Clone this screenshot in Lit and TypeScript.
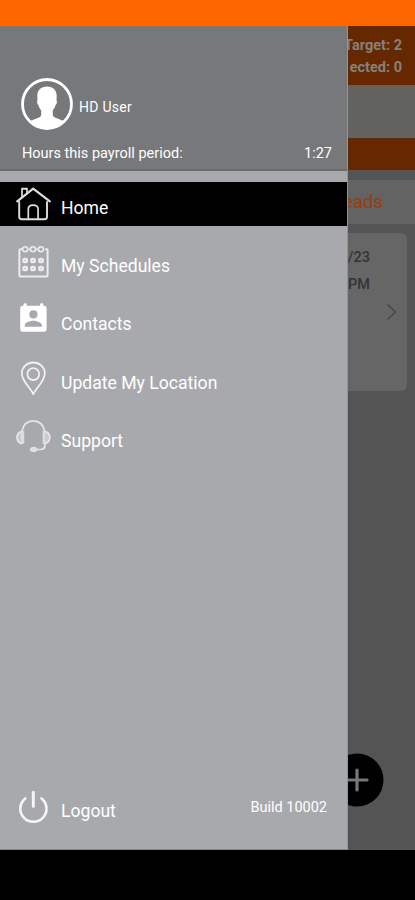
import { LitElement, html, css, svg } from "lit";
import { customElement } from "lit/decorators.js";
import { classMap } from "lit/directives/class-map.js";

const icons = {
  home: svg`<g fill="none" stroke="#dedede" stroke-width="1.900" stroke-linejoin="round" stroke-linecap="round">
    <path d="M3.200 17v14.800q0 2.500 2.500 2.500h22.800q2.500 0 2.500-2.500V17"/>
    <path d="M1.200 16.400 17.200 3.600 33.800 16.400" stroke-width="2.200"/>
    <path d="M6 11.500V3.500h5v4M6 4h5M12.300 34.300V24.300q0-4.200 4.900-4.200t4.900 4.200V34.300" stroke-width="1.700"/></g>`,
  calendar: svg`<g fill="none" stroke="#ececec" stroke-width="1.600">
    <path d="M6 6.200H4.400q-1 0-1 1v25.200q0 1 1 1h26.200q1 0 1-1V7.200q0-1-1-1H29M12.500 6.200h1.300M20.200 6.200h1.500" stroke-width="2"/>
    <circle cx="9.200" cy="6.200" r="2.500"/><circle cx="17" cy="6.200" r="2.500"/><circle cx="24.900" cy="6.200" r="2.500"/></g>
    <g fill="#ececec">${[9.2, 17.1, 25].map((x) => [17.5, 25.5].map((y) => svg`<rect x=${x - 2.9} y=${y - 2.7} width="5.800" height="5.400" rx="2"/>`))}</g>
    <g fill="#c4c5c7">${[9.2, 17.1, 25].map((x) => [17.5, 25.5].map((y) => svg`<circle cx=${x} cy=${y} r=".8"/>`))}</g>`,
  contacts: svg`<path fill="#fff" fill-rule="evenodd" d="M7.500 3.200q0-1 1-1h1.200q1 0 1 1v1.500h13.400V3.200q0-1 1-1h1.200q1 0 1 1v1.500h.7q2.600 0 2.600 2.600v20.800q0 2.600-2.600 2.600H6.800q-2.600 0-2.600-2.600V7.300q0-2.600 2.600-2.600h.7zM17.400 9.300a4.100 4.100 0 1 0 0 8.200a4.100 4.100 0 1 0 0-8.200M8.700 25.800h17.200v-1.300c0-3.200-5.600-4.700-8.600-4.700s-8.600 1.500-8.600 4.700z"/>`,
  pin: svg`<g fill="none" stroke="#f1f1f1" stroke-width="1.800"><path d="M17.300 34.100C15 28.500 5.800 21.300 5.800 13.500a11.500 11 0 0 1 23 0c0 7.800-9.200 15-11.500 20.600z" stroke-linejoin="round"/><circle cx="17.300" cy="14.100" r="5.900"/></g>`,
  headset: svg`<g fill="none" stroke="#e6e6e7" stroke-width="1.700"><path d="M5.800 13.500C7.200 6.500 11.200 2.800 17.300 2.800S27.400 6.500 28.800 13.500"/>
    <path d="M6.200 13.600H5.300Q1 15.200 1 19.500t4.300 6h.9zM28.300 13.600h1.200q4.300 1.600 4.300 5.900t-4.300 6h-1.200z" fill="#c9cacc"/>
    <path d="M7 13v12.600M27.800 13v12.600" stroke-width="2.400" stroke="#dcdcdd"/>
    <path d="M28.900 26v1.200q0 4.300-4.300 4.300H20"/><rect x="14.300" y="29.600" width="6.800" height="3.800" rx="1.900" fill="#e0e0e0" stroke-width="1"/></g>`,
  power: svg`<g fill="none" stroke="#f5f5f5" stroke-linecap="round"><path d="M9.300 9.400A13.100 13.100 0 1 0 25.500 9.400" stroke-width="2.600"/><path d="M17.300 3.300v14" stroke-width="3"/></g>`,
};

const items: { label: string; icon: keyof typeof icons; active?: boolean }[] = [
  { label: "Home", icon: "home", active: true },
  { label: "My Schedules", icon: "calendar" },
  { label: "Contacts", icon: "contacts" },
  { label: "Update My Location", icon: "pin" },
  { label: "Support", icon: "headset" },
];

@customElement("app-root")
export class AppRoot extends LitElement {
  static styles = css`
    :host { display: flex; flex-direction: column; width: 415px; height: 900px; overflow: hidden; font-family: Roboto, sans-serif; background: #000; color: #fff; }
    * { box-sizing: border-box; }
    svg { display: block; flex: none; }
    .status { height: 26px; flex: none; background: #fe6600; }
    .main { height: 824px; flex: none; display: flex; }
    .drawer { width: 348px; flex: none; display: flex; flex-direction: column; background: #a8a9ad; border-right: 1px solid #929396; border-bottom: 1px solid #87888a; }
    .profile { height: 145px; flex: none; background: #77787a; border-bottom: 2px solid #6b6c6e; padding: 52px 15px 0 21px; }
    .user { display: flex; align-items: center; gap: 6px; height: 52px; font-size: 14px; }
    .user span { padding-top: 6px; letter-spacing: .25px; }
    .hours { display: flex; justify-content: space-between; margin-top: 15px; padding-left: 1px; font-size: 14.500px; line-height: 17px; }
    .menu { padding-top: 11px; flex: 1; }
    .item { height: 44px; margin-bottom: 14.200px; padding: 0 0 0 16px; display: flex; align-items: flex-start; gap: 10px; font-size: 17.600px; }
    .item svg { margin-top: 3px; }
    .item span { line-height: 22px; margin-top: 15px; white-space: nowrap; }
    .active { background: #000; }
    .foot { height: 65px; display: flex; padding: 0 20px 0 16px; gap: 10px; font-size: 17.600px; }
    .foot svg { margin-top: 5px; }
    .foot .out { line-height: 22px; margin-top: 16px; flex: 1; }
    .foot .build { font-size: 14.500px; line-height: 18px; margin-top: 15px; }
    .page { flex: 1; min-width: 0; overflow: hidden; display: flex; flex-direction: column; background: #545454; }
    .totals { height: 59px; flex: none; background: #652800; color: #858079; font-size: 14.500px; font-weight: 700; line-height: 22px; padding: 8.500px 13px 0 0; display: flex; flex-direction: column; align-items: flex-end; white-space: nowrap; }
    .band { height: 53px; flex: none; background: #626361; }
    .bar { height: 32px; flex: none; background: #652800; }
    .tab { height: 44px; flex: none; margin-top: 10px; background: #636363; color: #963d10; font-size: 18.700px; line-height: 45px; padding-right: 32px; display: flex; justify-content: flex-end; }
    .card { height: 158px; flex: none; margin: 9px 8px 0 0; border-radius: 0 6px 6px 0; background: #666; color: #343434; font-size: 14.500px; font-weight: 500; line-height: 26.500px; padding: 12px 0 0; }
    .when { width: 22px; display: flex; flex-direction: column; align-items: flex-end; white-space: nowrap; }
    .card svg { margin: 5px 0 0 38px; }
    .fab { margin-top: auto; margin-bottom: 43px; }
  `;

  render() {
    return html`
      <div class="status"></div>
      <div class="main">
        <nav class="drawer">
          <div class="profile">
            <div class="user">
              <svg width="52" height="52" viewBox="0 0 52 52"><circle cx="26" cy="26" r="24.500" fill="none" stroke="#fff" stroke-width="2.800"/>
                <path fill="#fff" d="M26 8.500c6 0 9.700 3.600 9.700 9.700 0 2-.3 3.200-.1 4.500.7 1 .2 3.300-1 4.200-.6 2.200-1.500 4-2.800 5.400v4.600c0 2.500 4.600 3.300 11.200 6.200A24.500 24.500 0 0 1 9 43.100c6.600-2.900 11.200-3.700 11.200-6.200v-4.600c-1.300-1.400-2.200-3.200-2.800-5.400-1.200-.9-1.700-3.200-1-4.200.2-1.300-.1-2.500-.1-4.500 0-6.100 3.700-9.700 9.700-9.700z"/></svg>
              <span>HD User</span>
            </div>
            <div class="hours"><span>Hours this payroll period:</span><span>1:27</span></div>
          </div>
          <div class="menu">
            ${items.map((item) => html`<div class=${classMap({ item: true, active: !!item.active })}>
              <svg width="35" height="38" viewBox="0 0 35 38">${icons[item.icon]}</svg><span>${item.label}</span>
            </div>`)}
          </div>
          <div class="foot">
            <svg width="35" height="38" viewBox="0 0 35 38">${icons.power}</svg>
            <span class="out">Logout</span><span class="build">Build 10002</span>
          </div>
        </nav>
        <section class="page">
          <div class="totals"><span>Target: 2</span><span>ected: 0</span></div>
          <div class="band"></div>
          <div class="bar"></div>
          <div class="tab"><span>eads</span></div>
          <div class="card">
            <div class="when"><span>/23</span><span>PM</span></div>
            <svg width="12" height="18" viewBox="0 0 12 18"><path d="M1.500 1.500 9.500 9l-8 7.500" fill="none" stroke="#444" stroke-width="1.300"/></svg>
          </div>
          <svg class="fab" width="36" height="54" viewBox="0 0 36 54"><circle cx="9" cy="27" r="26.500" fill="#000"/><path d="M9 17v20M-1 27h20" stroke="#777" stroke-width="3.200" stroke-linecap="round"/></svg>
        </section>
      </div>
    `;
  }
}
